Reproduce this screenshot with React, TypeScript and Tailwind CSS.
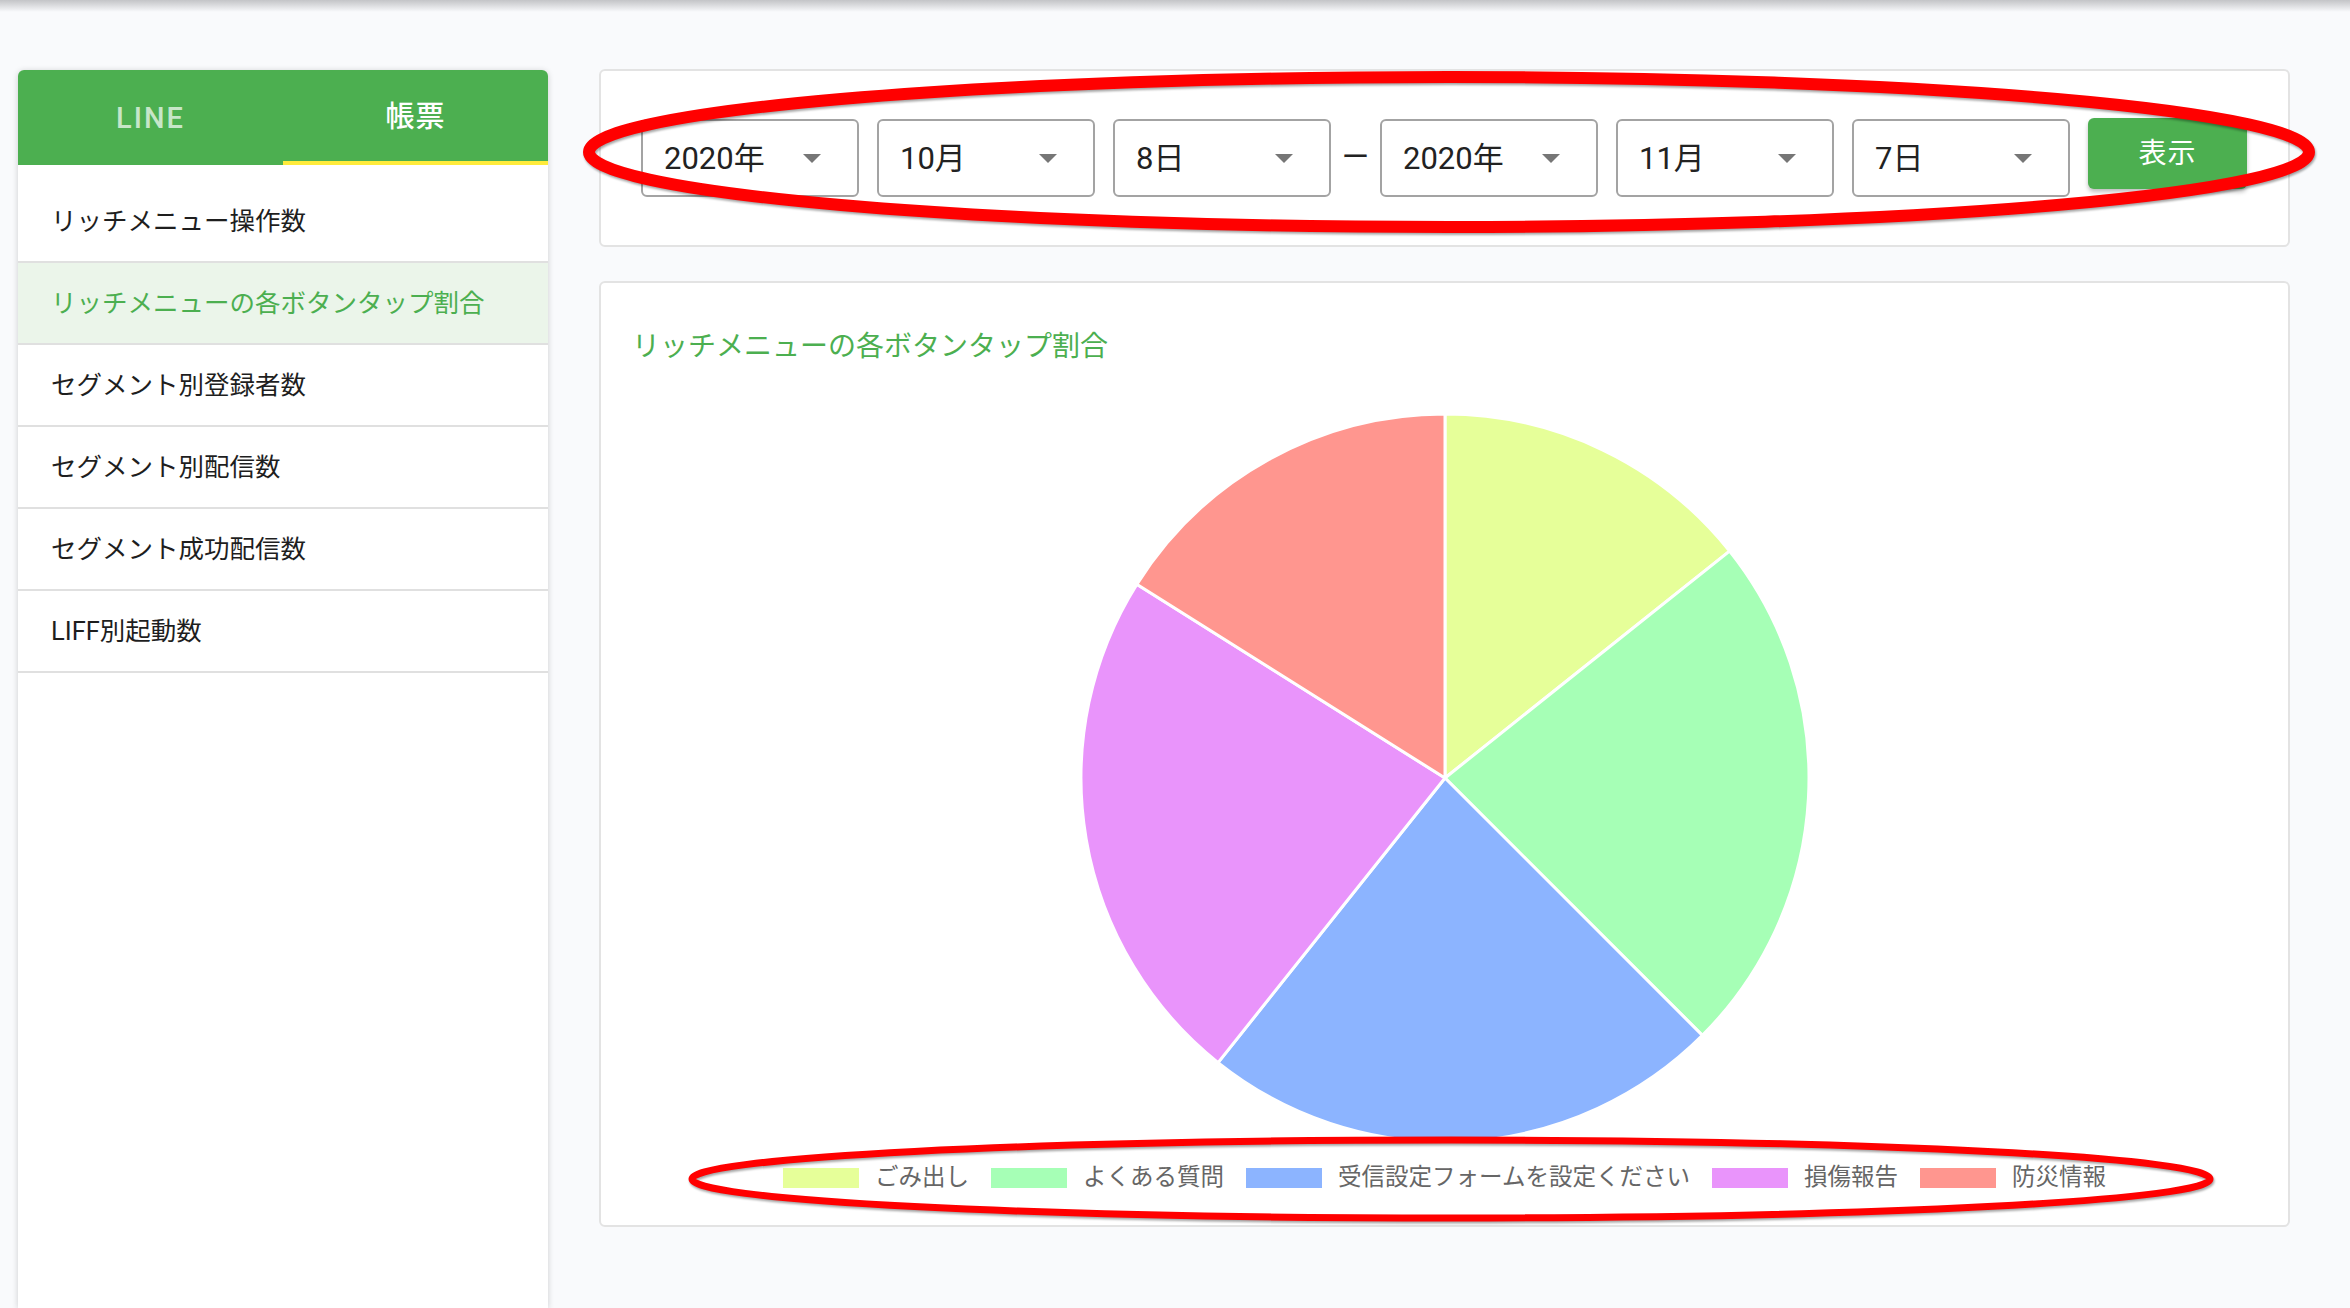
import React from "react";

type Slice = { label: string; value: number; color: string; box: string };

const slices: Slice[] = [
  { label: "ごみ出し", value: 8, color: "#e6ff99", box: "bg-[#e6ff99]" },
  { label: "よくある質問", value: 13, color: "#a6ffb6", box: "bg-[#a6ffb6]" },
  { label: "受信設定フォームを設定ください", value: 13, color: "#8cb4ff", box: "bg-[#8cb4ff]" },
  { label: "損傷報告", value: 13, color: "#e994fb", box: "bg-[#e994fb]" },
  { label: "防災情報", value: 9, color: "#ff968f", box: "bg-[#ff968f]" },
];

const menuItems = [
  { label: "リッチメニュー操作数", active: false },
  { label: "リッチメニューの各ボタンタップ割合", active: true },
  { label: "セグメント別登録者数", active: false },
  { label: "セグメント別配信数", active: false },
  { label: "セグメント成功配信数", active: false },
  { label: "LIFF別起動数", active: false },
];

function Arrow() {
  return (
    <svg width="18" height="9" viewBox="0 0 18 9" className="shrink-0">
      <polygon points="0,0 18,0 9,9" fill="#767676" />
    </svg>
  );
}

function Select({ value }: { value: string }) {
  return (
    <div className="w-[218px] h-[78px] shrink-0 border-2 border-[#a3a3a3] rounded-[6px] flex items-center justify-between pl-[21px] pr-[36px] bg-white">
      <span className="text-[31px] leading-none text-[#222222]">{value}</span>
      <Arrow />
    </div>
  );
}

function Pie() {
  const total = slices.reduce((s, x) => s + x.value, 0);
  const cx = 366;
  const cy = 366;
  const r = 364;
  let acc = 0;
  const paths = slices.map((s) => {
    const a0 = (acc / total) * Math.PI * 2;
    acc += s.value;
    const a1 = (acc / total) * Math.PI * 2;
    const x0 = cx + r * Math.sin(a0);
    const y0 = cy - r * Math.cos(a0);
    const x1 = cx + r * Math.sin(a1);
    const y1 = cy - r * Math.cos(a1);
    const large = a1 - a0 > Math.PI ? 1 : 0;
    const d = `M ${cx} ${cy} L ${x0} ${y0} A ${r} ${r} 0 ${large} 1 ${x1} ${y1} Z`;
    return <path key={s.label} d={d} fill={s.color} stroke="#ffffff" strokeWidth={3} />;
  });
  return (
    <svg width="732" height="732" viewBox="0 0 732 732" className="self-center mt-[45px] shrink-0">
      {paths}
    </svg>
  );
}

export default function App() {
  return (
    <div className="relative w-[2350px] h-[1308px] overflow-hidden bg-[#f9fafc] font-[Roboto,'Noto_Sans_CJK_JP',sans-serif]">
      <div className="h-[12px] bg-linear-to-b from-[#c3c4c7] to-[#f9fafc]" />
      <div className="flex pl-[18px] pt-[58px] gap-[51px] h-[1296px]">
        {/* Sidebar */}
        <div className="w-[530px] shrink-0 self-stretch bg-white rounded-t-[6px] shadow-[0_1px_6px_rgba(0,0,0,0.18)] flex flex-col overflow-hidden">
          <div className="h-[95px] bg-[#4caf50] flex">
            <div className="flex-1 flex flex-col">
              <div className="flex-1 flex items-center justify-center pt-[6px] text-[29px] font-medium tracking-[2px] text-white/70">
                LINE
              </div>
              <div className="h-[4px]" />
            </div>
            <div className="flex-1 flex flex-col">
              <div className="flex-1 flex items-center justify-center pt-[4px] text-[29px] font-medium tracking-[1px] text-white">
                帳票
              </div>
              <div className="h-[4px] bg-[#ffeb3b]" />
            </div>
          </div>
          <div className="pt-[16px] flex flex-col">
            {menuItems.map((m) => (
              <div
                key={m.label}
                className={
                  m.active
                    ? "h-[82px] border-b-2 border-[#e0e0e0] bg-[#ebf5ea] flex items-center pl-[33px] text-[25.5px] text-[#4caf50]"
                    : "h-[82px] border-b-2 border-[#e0e0e0] flex items-center pl-[33px] text-[25.5px] text-[#1e1e1e]"
                }
              >
                {m.label}
              </div>
            ))}
          </div>
        </div>

        {/* Main */}
        <div className="w-[1691px] shrink-0 flex flex-col gap-[34px] -mt-px">
          <div className="h-[178px] bg-white border-2 border-[#e3e3e3] rounded-[6px] flex items-start pt-[48px] pl-[40px]">
            <div className="flex items-start gap-[18px]">
              <Select value="2020年" />
              <Select value="10月" />
              <Select value="8日" />
            </div>
            <div className="w-[49px] h-[78px] flex items-center justify-center text-[28px] text-[#222222]">
              ー
            </div>
            <div className="flex items-start gap-[18px]">
              <Select value="2020年" />
              <Select value="11月" />
              <Select value="7日" />
              <button className="w-[159px] h-[71px] -mt-px rounded-[6px] bg-[#4caf50] text-white text-[28px] tracking-[1px] shadow-[0_3px_4px_rgba(0,0,0,0.25)] flex items-center justify-center">
                表示
              </button>
            </div>
          </div>

          <div className="h-[946px] bg-white border-2 border-[#e3e3e3] rounded-[6px] flex flex-col">
            <div className="pl-[31px] pt-[44px] leading-[40px] text-[28px] text-[#4caf50]">
              リッチメニューの各ボタンタップ割合
            </div>
            <Pie />
            <div className="mt-[22px] h-[24px] flex items-center justify-center gap-[22px]">
              {slices.map((s) => (
                <div key={s.label} className="flex items-center gap-[16px]">
                  <div className={`w-[76px] h-[20px] ${s.box}`} />
                  <span className="text-[23.5px] leading-none text-[#666666]">{s.label}</span>
                </div>
              ))}
            </div>
          </div>
        </div>
      </div>

      {/* Red annotation ellipses */}
      <svg
        width="2350"
        height="1308"
        viewBox="0 0 2350 1308"
        className="absolute top-0 left-0 pointer-events-none drop-shadow-[1px_2px_1px_rgba(0,0,0,0.35)]"
      >
        <ellipse cx="1449" cy="152" rx="860" ry="75" fill="none" stroke="#ff0000" strokeWidth="12" />
        <ellipse cx="1451" cy="1179" rx="759" ry="39" fill="none" stroke="#ff0000" strokeWidth="7" />
      </svg>
    </div>
  );
}
